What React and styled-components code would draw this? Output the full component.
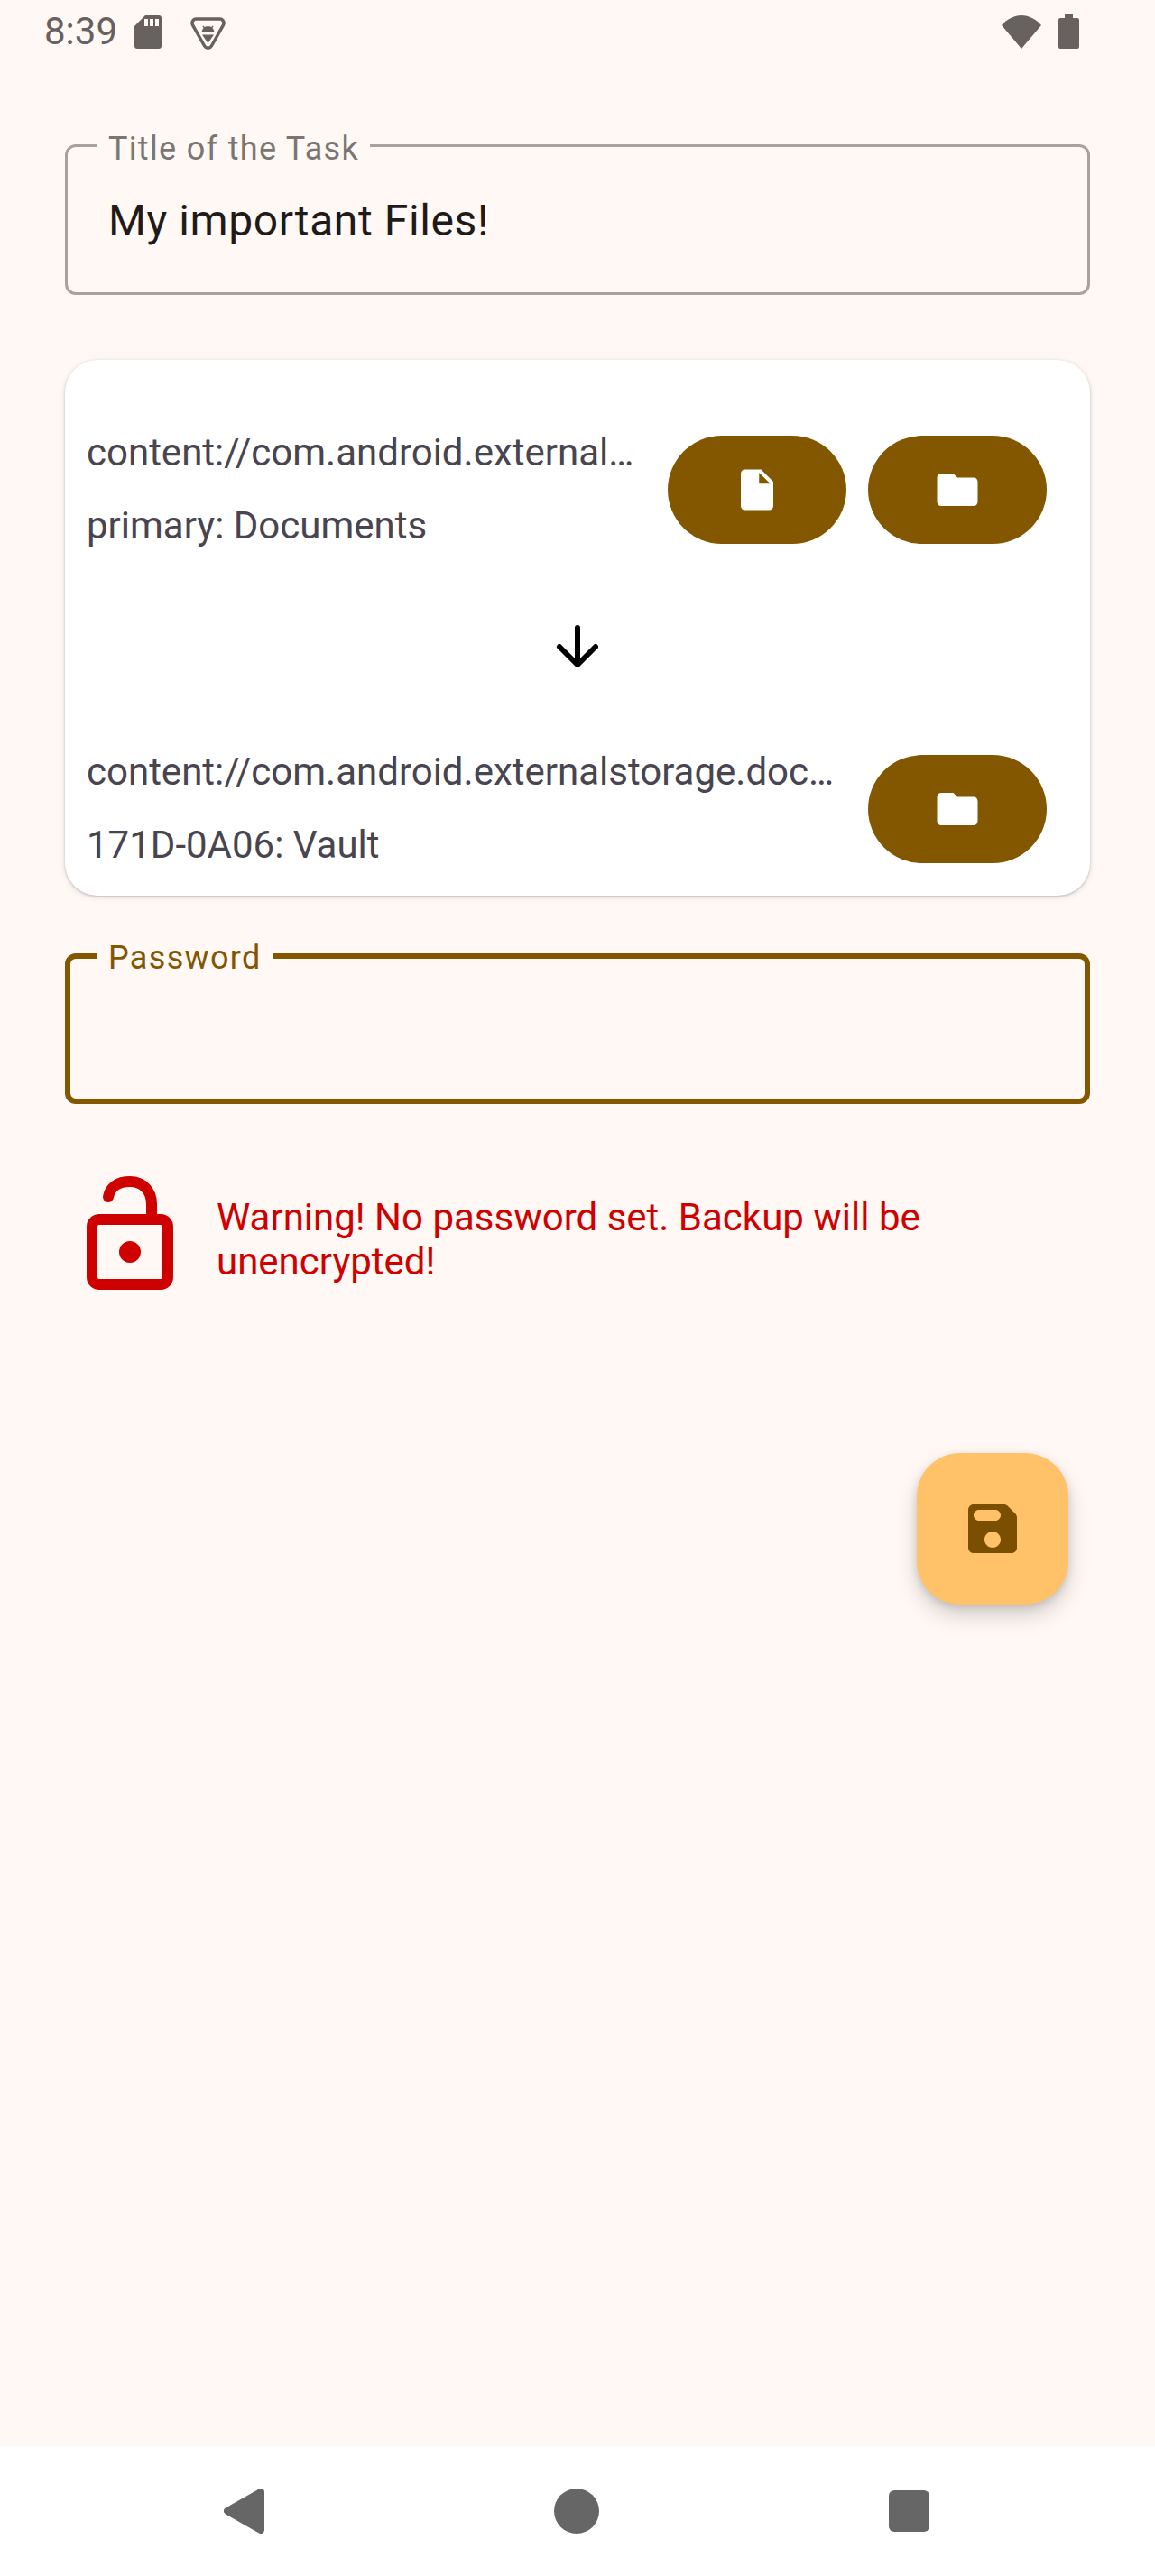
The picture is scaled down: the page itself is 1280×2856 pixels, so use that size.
import React from 'react';
import styled, { createGlobalStyle } from 'styled-components';

const BROWN = '#835600';
const PAGE_BG = '#fff8f5';

const GlobalStyle = createGlobalStyle`
  html, body {
    margin: 0;
    padding: 0;
    background: ${PAGE_BG};
    font-family: Roboto, "Noto Sans", sans-serif;
  }
  * {
    box-sizing: border-box;
  }
`;

const Screen = styled.div`
  width: 1280px;
  height: 2856px;
  display: flex;
  flex-direction: column;
  background: ${PAGE_BG};
  overflow: hidden;
`;

const StatusBar = styled.div`
  height: 70px;
  flex: none;
  display: flex;
  align-items: center;
  padding: 0 84px 0 49px;
  color: #67625f;
`;

const Clock = styled.span`
  font-size: 42px;
  line-height: 70px;
  margin-right: 19px;
`;

const StatusIcon = styled.svg`
  display: block;
  flex: none;
  margin-left: ${(p) => p.$left || 0}px;
  margin-top: ${(p) => p.$top || 0}px;
  fill: currentColor;
`;

const Spacer = styled.span`
  flex: 1;
`;

const Content = styled.main`
  flex: 1;
  display: flex;
  flex-direction: column;
  padding: 90px 72px 0;
`;

const Field = styled.div`
  position: relative;
  height: 167px;
  flex: none;
  display: flex;
  align-items: center;
  padding: 3px 48px 0 45px;
  border: ${(p) => (p.$focused ? `6px solid ${BROWN}` : '3px solid #a8a29c')};
  border-radius: 12px;
`;

const FieldLabel = styled.label`
  position: absolute;
  top: ${(p) => (p.$focused ? -25 : -22)}px;
  left: ${(p) => (p.$focused ? 30 : 33)}px;
  padding: 0 12px;
  background: ${PAGE_BG};
  font-size: 36px;
  line-height: 48px;
  letter-spacing: 1.32px;
  color: ${(p) => (p.$focused ? BROWN : '#7b7672')};
`;

const FieldValue = styled.div`
  font-size: 48px;
  line-height: 72px;
  letter-spacing: 0.6px;
  color: #1f1b18;
`;

const PathCard = styled.section`
  margin-top: 72px;
  padding: 73px 0 26px;
  background: #fff;
  border-radius: 36px;
  box-shadow: 0 1px 3px rgba(0, 0, 0, 0.22), 0 2px 8px rgba(0, 0, 0, 0.08);
`;

const PathRow = styled.div`
  display: flex;
  align-items: center;
  gap: 24px;
  padding: 0 48px 0 24px;
`;

const PathText = styled.div`
  flex: 1;
  min-width: 0;
`;

const PathLine = styled.div`
  font-size: 42px;
  line-height: 60px;
  color: #49454f;
  white-space: nowrap;

  & + & {
    margin-top: 21px;
  }
`;

const PickButton = styled.button`
  flex: none;
  width: 198px;
  height: 120px;
  display: flex;
  align-items: center;
  justify-content: center;
  padding: 0;
  border: none;
  border-radius: 60px;
  background: ${BROWN};
  color: #fff;
`;

const ArrowSlot = styled.div`
  display: flex;
  justify-content: center;
  margin: 68px 0 73px;
`;

const PasswordWrap = styled.div`
  margin-top: 64px;
`;

const WarningRow = styled.div`
  display: flex;
  align-items: center;
  gap: 48px;
  margin-top: 80px;
  padding: 0 72px 0 24px;
`;

const WarningText = styled.p`
  margin: 0;
  padding-top: 13px;
  font-size: 42px;
  line-height: 49px;
  color: #cf0000;
`;

const FabRow = styled.div`
  display: flex;
  justify-content: flex-end;
  margin-top: 181px;
  padding-right: 24px;
`;

const Fab = styled.button`
  width: 168px;
  height: 168px;
  display: flex;
  align-items: center;
  justify-content: center;
  padding: 0;
  border: none;
  border-radius: 48px;
  background: #ffc268;
  color: #7a4f00;
  box-shadow: 0 12px 24px rgba(0, 0, 0, 0.17), 0 3px 8px rgba(0, 0, 0, 0.12);
`;

const NavBar = styled.nav`
  height: 144px;
  flex: none;
  display: flex;
  align-items: center;
  justify-content: center;
  gap: 321px;
  padding: 0 2px 0 0;
  background: #fff;
  color: #666;
`;

const NavIcon = styled.svg`
  display: block;
  fill: currentColor;
`;

const MaterialIcon = ({ size, d }) => (
  <svg width={size} height={size} viewBox="0 0 24 24" fill="currentColor">
    <path d={d} />
  </svg>
);

const FILE_PATH = 'M6 2c-1.1 0-2 .9-2 2v16c0 1.1.9 2 2 2h12c1.1 0 2-.9 2-2V8l-6-6H6zm7 7V3.5L18.5 9H13z';
const FOLDER_PATH = 'M10 4H4c-1.1 0-1.99.9-1.99 2L2 18c0 1.1.9 2 2 2h16c1.1 0 2-.9 2-2V8c0-1.1-.9-2-2-2h-8l-2-2z';
const SAVE_PATH = 'M17.59 3.59c-.38-.38-.89-.59-1.42-.59H5c-1.11 0-2 .9-2 2v14c0 1.1.9 2 2 2h14c1.1 0 2-.9 2-2V7.83c0-.53-.21-1.04-.59-1.41l-2.82-2.83zM12 19c-1.66 0-3-1.34-3-3s1.34-3 3-3 3 1.34 3 3-1.34 3-3 3zm1-10H7c-1.1 0-2-.9-2-2s.9-2 2-2h6c1.1 0 2 .9 2 2s-.9 2-2 2z';

const SdCardIcon = () => (
  <StatusIcon width="30" height="37" viewBox="0 0 30 37">
    <path d="M12 0H27a3 3 0 0 1 3 3V34a3 3 0 0 1-3 3H3a3 3 0 0 1-3-3V12Z" />
    <path d="M11 4h4v8h-4zM17 4h4v8h-4zM23 4h4v8h-4z" fill={PAGE_BG} />
  </StatusIcon>
);

const DebugIcon = () => (
  <StatusIcon width="39" height="36" viewBox="0 0 39 36" $left={32} $top={3}>
    <path
      d="M6.5 2H32.5a4.5 4.5 0 0 1 3.9 6.8L23.4 32a4.5 4.5 0 0 1-7.8 0L2.6 8.8A4.5 4.5 0 0 1 6.5 2Z"
      fill="none"
      stroke="currentColor"
      strokeWidth="3.5"
    />
    <path d="M12.5 17a7 7 0 0 1 14 0Z" />
    <path d="M13 19.5H26L19.5 29Z" />
    <path d="M14 10l2 2.5M25 10l-2 2.5" stroke="currentColor" strokeWidth="1.5" />
  </StatusIcon>
);

const WifiIcon = () => (
  <StatusIcon width="44" height="37" viewBox="0 0 44 37">
    <path d="M0 11C6 4 14 0 22 0C30 0 38 4 44 11L22 37Z" />
  </StatusIcon>
);

const BatteryIcon = () => (
  <StatusIcon width="23" height="38" viewBox="0 0 23 38" $left={19}>
    <path d="M7 0h9v4h5a2 2 0 0 1 2 2V36a2 2 0 0 1-2 2H2a2 2 0 0 1-2-2V6a2 2 0 0 1 2-2h5Z" />
  </StatusIcon>
);

const DownArrow = () => (
  <svg width="72" height="72" viewBox="0 0 72 72" fill="none" stroke="#000" strokeWidth="6" strokeLinecap="round" strokeLinejoin="round">
    <path d="M36 15V56M16 36L36 56L56 36" />
  </svg>
);

const LockSvg = styled.svg`
  flex: none;
  display: block;
`;

const OpenLock = () => (
  <LockSvg width="96" height="126" viewBox="0 0 96 126" fill="none" stroke="#cf0000" strokeWidth="12">
    <rect x="6" y="48" width="84" height="72" rx="8" />
    <path d="M24 23C26 12 35 6 48 6C62 6 72 16 72 31V44" strokeLinecap="round" />
    <circle cx="48" cy="84" r="12" fill="#cf0000" stroke="none" />
  </LockSvg>
);

const App = () => (
  <Screen>
    <GlobalStyle />
    <StatusBar>
      <Clock>8:39</Clock>
      <SdCardIcon />
      <DebugIcon />
      <Spacer />
      <WifiIcon />
      <BatteryIcon />
    </StatusBar>

    <Content>
      <Field>
        <FieldLabel>Title of the Task</FieldLabel>
        <FieldValue>My important Files!</FieldValue>
      </Field>

      <PathCard>
        <PathRow>
          <PathText>
            <PathLine>content://com.android.external…</PathLine>
            <PathLine>primary: Documents</PathLine>
          </PathText>
          <PickButton><MaterialIcon size={54} d={FILE_PATH} /></PickButton>
          <PickButton><MaterialIcon size={54} d={FOLDER_PATH} /></PickButton>
        </PathRow>
        <ArrowSlot><DownArrow /></ArrowSlot>
        <PathRow>
          <PathText>
            <PathLine>content://com.android.externalstorage.doc…</PathLine>
            <PathLine>171D-0A06: Vault</PathLine>
          </PathText>
          <PickButton><MaterialIcon size={54} d={FOLDER_PATH} /></PickButton>
        </PathRow>
      </PathCard>

      <PasswordWrap>
        <Field $focused>
          <FieldLabel $focused>Password</FieldLabel>
        </Field>
      </PasswordWrap>

      <WarningRow>
        <OpenLock />
        <WarningText>Warning! No password set. Backup will be unencrypted!</WarningText>
      </WarningRow>

      <FabRow>
        <Fab><MaterialIcon size={72} d={SAVE_PATH} /></Fab>
      </FabRow>
    </Content>

    <NavBar>
      <NavIcon width="45" height="50" viewBox="0 0 45 50">
        <path d="M41 4L4 25L41 46Z" stroke="currentColor" strokeWidth="8" strokeLinejoin="round" />
      </NavIcon>
      <NavIcon width="50" height="50" viewBox="0 0 50 50">
        <circle cx="25" cy="25" r="25" />
      </NavIcon>
      <NavIcon width="45" height="46" viewBox="0 0 45 46">
        <rect width="45" height="46" rx="6" />
      </NavIcon>
    </NavBar>
  </Screen>
);

export default App;
